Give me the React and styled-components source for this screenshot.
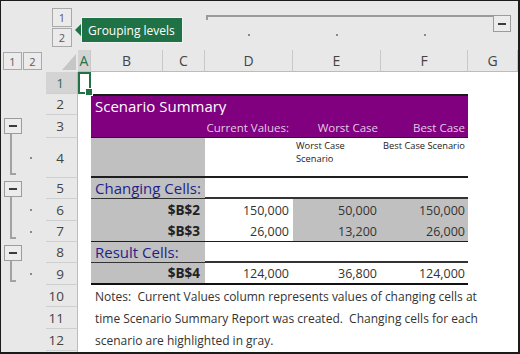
import React from "react";
import styled, { createGlobalStyle } from "styled-components";

const FONT = `"Open Sans", "Noto Sans", "DejaVu Sans", sans-serif`;

const GlobalStyle = createGlobalStyle`
  html, body { margin: 0; padding: 0; background: #ffffff; }
  body { font-family: ${FONT}; }
  * { box-sizing: border-box; }
`;

const Frame = styled.div`
  width: 520px;
  height: 354px;
  border-style: solid;
  border-color: #1b1b1b;
  border-width: 1px 2px 2px 1px;
  background: #e8e8e8;
  overflow: hidden;
`;

const Sheet = styled.div`
  height: 100%;
  display: grid;
  grid-template-columns: 45px 32px 13px 72px 42px 88px 88px 87px 1fr;
  grid-template-rows: 49px 22px 22px 21px 23px 40px 21px 22px 21px 21px 22px 22px 22px 22px 1fr;
`;

/* ---------- outline controls ---------- */
const LevelStack = styled.div`
  grid-column: 2;
  grid-row: 1;
  display: flex;
  flex-direction: column;
  gap: 1px;
  padding: 7px 0 0 6px;
`;

const LevelRow = styled.div`
  grid-column: 1;
  grid-row: 2;
  display: flex;
  gap: 1px;
  padding: 2px 0 0 2px;
`;

const LevelBtn = styled.div`
  width: ${(p) => p.$w}px;
  height: ${(p) => p.$h}px;
  border: 1px solid #a9a9a9;
  background: #ebebeb;
  color: #5a5a5a;
  font-size: 11px;
  display: flex;
  align-items: center;
  justify-content: center;
`;

const Tooltip = styled.div`
  grid-column: 3 / 7;
  grid-row: 1;
  align-self: start;
  justify-self: start;
  margin: 16px 0 0 3px;
  position: relative;
  width: 102px;
  height: 26px;
  background: #1f7246;
  border: 1px solid #f2f2f2;
  color: #ffffff;
  font-size: 12px;
  display: flex;
  align-items: center;
  padding-left: 6px;
  white-space: nowrap;
  &::before {
    content: "";
    position: absolute;
    left: -7px;
    top: 50%;
    margin-top: -6px;
    border: 6px solid transparent;
    border-left: 0;
    border-right: 6px solid #1f7246;
  }
`;

const TopOutline = styled.div`
  grid-column: 6 / 10;
  grid-row: 1;
  display: flex;
  flex-direction: column;
  padding-top: 14px;
`;

const LineRow = styled.div`
  display: flex;
  align-items: flex-start;
  padding: 0 7px 0 1px;
`;

const GroupLine = styled.div`
  flex: 1;
  height: 5px;
  border-top: 2px solid #9a9a9a;
  border-left: 2px solid #9a9a9a;
`;

const OutlineBtn = styled.div`
  width: 18px;
  height: ${(p) => p.$h || 16}px;
  flex: none;
  border: 1px solid #9c9c9c;
  background: #ececec;
  display: flex;
  align-items: center;
  justify-content: center;
`;

const Minus = styled.div`
  width: 8px;
  height: 2px;
  background: #3c3c3c;
`;

const DotsRow = styled.div`
  display: grid;
  grid-template-columns: 88px 88px 87px;
  justify-items: center;
  margin-top: 2px;
`;

const Dot = styled.div`
  width: 2px;
  height: 2px;
  background: #8a8a8a;
`;

const RowGroup = styled.div`
  grid-column: 1;
  grid-row: ${(p) => p.$rows};
  display: flex;
  flex-direction: column;
  align-items: flex-start;
  padding: 3px 0 3px 3px;
`;

const Bracket = styled.div`
  flex: 1;
  width: 6px;
  margin-left: 6px;
  border-left: 2px solid #a2a2a2;
  border-bottom: 2px solid #a2a2a2;
`;

const GutterDot = styled(Dot)`
  grid-column: 1;
  grid-row: ${(p) => p.$row};
  align-self: center;
  justify-self: start;
  margin-left: 29px;
`;

/* ---------- headers ---------- */
const Corner = styled.div`
  grid-column: 2;
  grid-row: 2;
  align-self: end;
  justify-self: end;
  margin: 0 2px 2px 0;
  display: flex;
`;

const ColHead = styled.div`
  grid-column: ${(p) => p.$col};
  grid-row: 2;
  display: flex;
  align-items: center;
  justify-content: center;
  font-size: 14px;
  color: ${(p) => (p.$active ? "#217346" : "#444444")};
  background: ${(p) => (p.$active ? "#d4d4d4" : "transparent")};
  border-right: 1px solid #c8c8c8;
  border-bottom: 1px solid #bcbcbc;
`;

const RowHead = styled.div`
  grid-column: 2;
  grid-row: ${(p) => p.$row};
  display: flex;
  align-items: center;
  justify-content: flex-end;
  padding-right: 13px;
  font-size: 13.5px;
  color: ${(p) => (p.$active ? "#2d6e63" : "#444444")};
  background: ${(p) => (p.$active ? "#d4d4d4" : "transparent")};
  border-bottom: 1px solid #cfcfcf;
  border-right: 1px solid #bcbcbc;
`;

const RowHeadFill = styled.div`
  grid-column: 2;
  grid-row: 15;
  border-right: 1px solid #bcbcbc;
`;

/* ---------- cells ---------- */
const SheetArea = styled.div`
  grid-column: 3 / 10;
  grid-row: 3 / 16;
  background: #ffffff;
`;

const Selection = styled.div`
  grid-column: 3;
  grid-row: 3;
  position: relative;
  border: 2px solid #217346;
  &::after {
    content: "";
    position: absolute;
    right: -4px;
    bottom: -4px;
    width: 6px;
    height: 6px;
    background: #217346;
    border: 1px solid #ffffff;
  }
`;

const TRow = styled.div`
  grid-column: 4 / 9;
  grid-row: ${(p) => p.$row};
  display: grid;
  grid-template-columns: 114px 88px 88px 87px;
  background: ${(p) => p.$bg || "transparent"};
  border-top: ${(p) => p.$top || "none"};
  border-bottom: ${(p) => p.$bottom || "none"};
`;

const Cell = styled.div`
  display: flex;
  align-items: ${(p) => p.$v || "center"};
  justify-content: ${(p) => (p.$right ? "flex-end" : "flex-start")};
  padding: ${(p) => p.$pad || "0 4px"};
  background: ${(p) => p.$fill || "transparent"};
  white-space: nowrap;
  min-width: 0;
`;

const Title = styled.span`
  grid-column: 1 / 5;
  font-size: 15px;
  line-height: 18px;
  color: #ffffff;
  padding-left: 4px;
  align-self: center;
`;

const ColTitle = styled.span`
  font-size: 11.5px;
  color: #e4c9e4;
`;

const Caption = styled.span`
  font-size: 9.3px;
  line-height: 13px;
  color: #222222;
  white-space: ${(p) => (p.$wrap ? "normal" : "nowrap")};
`;

const Section = styled.span`
  font-size: 15px;
  color: #1f1f8a;
`;

const Ref = styled.span`
  font-size: 13.5px;
  font-weight: 700;
  color: #222222;
`;

const Num = styled.span`
  font-size: 12.5px;
  color: #333333;
`;

const Note = styled.div`
  grid-column: 4 / 10;
  grid-row: ${(p) => p.$row};
  display: flex;
  align-items: center;
  padding-left: 4px;
  font-size: 12px;
  color: #333333;
  white-space: pre;
`;

const GRAY = "#c0c0c0";
const PURPLE = "#800080";

const rowLabels = [1, 2, 3, 4, 5, 6, 7, 8, 9, 10, 11, 12];
const cols = ["A", "B", "C", "D", "E", "F", "G"];

export default function App() {
  return (
    <>
      <GlobalStyle />
      <Frame>
        <Sheet>
          <LevelStack>
            <LevelBtn $w={20} $h={19}>1</LevelBtn>
            <LevelBtn $w={20} $h={19}>2</LevelBtn>
          </LevelStack>

          <TopOutline>
            <LineRow>
              <GroupLine />
              <OutlineBtn $h={17}>
                <Minus />
              </OutlineBtn>
            </LineRow>
            <DotsRow>
              <Dot />
              <Dot />
              <Dot />
            </DotsRow>
          </TopOutline>

          <LevelRow>
            <LevelBtn $w={19} $h={18}>1</LevelBtn>
            <LevelBtn $w={19} $h={18}>2</LevelBtn>
          </LevelRow>

          <Corner>
            <svg width="14" height="16" viewBox="0 0 14 16">
              <polygon points="14,0 14,16 0,16" fill="#c6c6c6" />
            </svg>
          </Corner>

          {cols.map((c, i) => (
            <ColHead key={c} $col={i + 3} $active={c === "A"}>
              {c}
            </ColHead>
          ))}

          {rowLabels.map((n) => (
            <RowHead key={n} $row={n + 2} $active={n === 1}>
              {n}
            </RowHead>
          ))}
          <RowHeadFill />

          <RowGroup $rows="5 / 7">
            <OutlineBtn>
              <Minus />
            </OutlineBtn>
            <Bracket />
          </RowGroup>
          <RowGroup $rows="7 / 10">
            <OutlineBtn>
              <Minus />
            </OutlineBtn>
            <Bracket />
          </RowGroup>
          <RowGroup $rows="10 / 12">
            <OutlineBtn>
              <Minus />
            </OutlineBtn>
            <Bracket />
          </RowGroup>
          <GutterDot $row={6} />
          <GutterDot $row={8} />
          <GutterDot $row={9} />
          <GutterDot $row={11} />

          <SheetArea />
          <Selection />

          <TRow $row={4} $bg={PURPLE} $top="2px solid #1a1a1a">
            <Title>Scenario Summary</Title>
          </TRow>

          <TRow $row={5} $bg={PURPLE} $bottom="1px solid #1a1a1a">
            <Cell />
            <Cell $right $v="flex-end" $pad="0 4px 2px 4px">
              <ColTitle>Current Values:</ColTitle>
            </Cell>
            <Cell $right $v="flex-end" $pad="0 3px 2px 4px">
              <ColTitle>Worst Case</ColTitle>
            </Cell>
            <Cell $right $v="flex-end" $pad="0 3px 2px 4px">
              <ColTitle>Best Case</ColTitle>
            </Cell>
          </TRow>

          <TRow $row={6} $bottom="2px solid #1e1e1e">
            <Cell $fill={GRAY} />
            <Cell />
            <Cell $v="flex-start" $pad="1px 3px">
              <Caption $wrap>
                Worst Case
                <br />
                Scenario
              </Caption>
            </Cell>
            <Cell $v="flex-start" $pad="1px 2px">
              <Caption>Best Case Scenario</Caption>
            </Cell>
          </TRow>

          <TRow $row={7} $bottom="2px solid #333333">
            <Cell $fill={GRAY}>
              <Section>Changing Cells:</Section>
            </Cell>
          </TRow>

          <TRow $row={8}>
            <Cell $fill={GRAY} $right $pad="0 5px">
              <Ref>$B$2</Ref>
            </Cell>
            <Cell $right>
              <Num>150,000</Num>
            </Cell>
            <Cell $right $fill={GRAY}>
              <Num>50,000</Num>
            </Cell>
            <Cell $right $fill={GRAY} $pad="0 3px">
              <Num>150,000</Num>
            </Cell>
          </TRow>

          <TRow $row={9} $bottom="1px solid #1e1e1e">
            <Cell $fill={GRAY} $right $pad="0 5px">
              <Ref>$B$3</Ref>
            </Cell>
            <Cell $right>
              <Num>26,000</Num>
            </Cell>
            <Cell $right $fill={GRAY}>
              <Num>13,200</Num>
            </Cell>
            <Cell $right $fill={GRAY} $pad="0 3px">
              <Num>26,000</Num>
            </Cell>
          </TRow>

          <TRow $row={10} $bottom="2px solid #333333">
            <Cell $fill={GRAY}>
              <Section>Result Cells:</Section>
            </Cell>
          </TRow>

          <TRow $row={11} $bottom="2px solid #111111">
            <Cell $fill={GRAY} $right $pad="0 5px">
              <Ref>$B$4</Ref>
            </Cell>
            <Cell $right>
              <Num>124,000</Num>
            </Cell>
            <Cell $right>
              <Num>36,800</Num>
            </Cell>
            <Cell $right $pad="0 3px">
              <Num>124,000</Num>
            </Cell>
          </TRow>

          <Note $row={12}>
            {"Notes:  Current Values column represents values of changing cells at"}
          </Note>
          <Note $row={13}>
            {"time Scenario Summary Report was created.  Changing cells for each"}
          </Note>
          <Note $row={14}>{"scenario are highlighted in gray."}</Note>

          <Tooltip>Grouping levels</Tooltip>
        </Sheet>
      </Frame>
    </>
  );
}
